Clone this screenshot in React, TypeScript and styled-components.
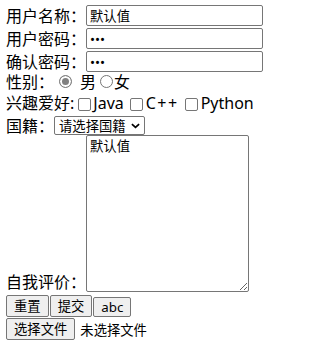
import React from "react";
import styled, { createGlobalStyle } from "styled-components";

const GlobalStyle = createGlobalStyle`
    html,
    body {
        margin: 0;
        padding: 0;
        background: #ffffff;
    }

    body {
        font-family: "Noto Sans", "Noto Sans CJK SC", sans-serif;
        font-size: 16px;
        color: #000000;
    }
`;

const App = () => {
    return (
        <>
            <GlobalStyle />
            <StyledForm onSubmit={(e) => e.preventDefault()}>
                <StyledRow $h={23} $mt={4}>
                    <StyledLabel>用户名称：</StyledLabel>
                    <StyledTextInput type="text" defaultValue="默认值" />
                </StyledRow>
                <StyledRow $h={23}>
                    <StyledLabel>用户密码：</StyledLabel>
                    <StyledTextInput type="password" defaultValue="abc" />
                </StyledRow>
                <StyledRow $h={23}>
                    <StyledLabel>确认密码：</StyledLabel>
                    <StyledTextInput type="password" defaultValue="abc" />
                </StyledRow>

                <StyledRow $h={17}>
                    <StyledLabel>性别：</StyledLabel>
                    <StyledRadio
                        type="radio"
                        name="sex"
                        defaultChecked
                        $ml={5}
                        $mr={3}
                    />
                    <StyledOption $ml={5}>男</StyledOption>
                    <StyledRadio type="radio" name="sex" $ml={4} $mr={1} />
                    <StyledOption>女</StyledOption>
                </StyledRow>

                <StyledRow $h={26}>
                    <StyledLabel>兴趣爱好:</StyledLabel>
                    <StyledCheck type="checkbox" $ml={4} $mr={2} />
                    <StyledOption>Java</StyledOption>
                    <StyledCheck type="checkbox" $ml={6} $mr={3} />
                    <StyledOption $spread>C++</StyledOption>
                    <StyledCheck type="checkbox" $ml={6} $mr={3} />
                    <StyledOption>Python</StyledOption>
                </StyledRow>

                <StyledRow $h={19}>
                    <StyledLabel>国籍：</StyledLabel>
                    <StyledSelectBox>
                        <StyledSelect defaultValue="">
                            <option value="">请选择国籍</option>
                            <option value="cn">中国</option>
                            <option value="us">美国</option>
                        </StyledSelect>
                        <StyledChevron viewBox="0 0 10 6" aria-hidden>
                            <path
                                d="M1 1 L5 4.6 L9 1"
                                fill="none"
                                stroke="#000"
                                strokeWidth="1.9"
                            />
                        </StyledChevron>
                    </StyledSelectBox>
                </StyledRow>

                <StyledRow $end>
                    <StyledLabel>自我评价：</StyledLabel>
                    <StyledTextArea defaultValue="默认值" />
                </StyledRow>

                <StyledRow $h={22} $mt={3} $end>
                    <StyledButton type="reset">重置</StyledButton>
                    <StyledButton type="submit">提交</StyledButton>
                    <StyledButton type="button" $h={20}>
                        abc
                    </StyledButton>
                </StyledRow>

                <StyledRow $h={22} $mt={1}>
                    <StyledButton type="button">选择文件</StyledButton>
                    <StyledFileSpan>未选择文件</StyledFileSpan>
                </StyledRow>
            </StyledForm>
        </>
    );
};

export default App;

const StyledForm = styled.form`
    display: flex;
    flex-direction: column;
    padding-left: 6px;
`;

const StyledRow = styled.div<{ $h?: number; $mt?: number; $end?: boolean }>`
    display: flex;
    align-items: ${({ $end }) => ($end ? "flex-end" : "center")};
    height: ${({ $h }) => ($h ? `${$h}px` : "auto")};
    margin-top: ${({ $mt }) => $mt ?? 0}px;
    white-space: nowrap;
`;

const StyledLabel = styled.span`
    line-height: 20px;
    white-space: nowrap;
`;

const StyledOption = styled.span<{ $ml?: number; $spread?: boolean }>`
    line-height: 20px;
    margin-left: ${({ $ml }) => $ml ?? 0}px;
    letter-spacing: ${({ $spread }) => ($spread ? "1.5px" : "0")};
`;

const StyledTextInput = styled.input`
    box-sizing: border-box;
    width: 177px;
    height: 21px;
    margin: 0;
    padding: 1px 3px;
    border: 1px solid #767676;
    border-radius: 2px;
    font-family: "Noto Sans", "Noto Sans CJK SC", sans-serif;
    font-size: 13.33px;
    color: #000;
    outline: none;
`;

const StyledRadio = styled.input<{ $ml: number; $mr: number }>`
    appearance: none;
    box-sizing: border-box;
    width: 13px;
    height: 13px;
    margin: 0 ${({ $mr }) => $mr}px 0 ${({ $ml }) => $ml}px;
    border: 1px solid #767676;
    border-radius: 50%;
    background: #ffffff;

    &:checked {
        border-color: #808080;
        background: #808080;
        box-shadow: inset 0 0 0 2px #ffffff;
    }
`;

const StyledCheck = styled.input<{ $ml: number; $mr: number }>`
    appearance: none;
    box-sizing: border-box;
    width: 13px;
    height: 13px;
    margin: 3px ${({ $mr }) => $mr}px 0 ${({ $ml }) => $ml}px;
    border: 1px solid #767676;
    border-radius: 2px;
    background: #ffffff;
`;

const StyledSelectBox = styled.div`
    position: relative;
    display: flex;
`;

const StyledSelect = styled.select`
    appearance: none;
    box-sizing: border-box;
    width: 91px;
    height: 19px;
    margin: 0;
    padding: 0 18px 0 4px;
    border: 1px solid #767676;
    border-radius: 2px;
    background: #ffffff;
    font-family: "Noto Sans CJK SC", "Noto Sans", sans-serif;
    font-size: 13.33px;
    line-height: 17px;
    color: #000;
`;

const StyledChevron = styled.svg`
    position: absolute;
    right: 5px;
    top: 7px;
    width: 9px;
    height: 6px;
    pointer-events: none;
`;

const StyledTextArea = styled.textarea`
    box-sizing: border-box;
    width: 163px;
    height: 157px;
    margin: 0;
    padding: 2px 3px;
    border: 1px solid #767676;
    border-radius: 2px;
    font-family: "Noto Sans CJK SC", monospace;
    font-size: 13.33px;
    line-height: 16px;
    color: #000;
    resize: both;
    outline: none;
`;

const StyledButton = styled.button<{ $h?: number }>`
    box-sizing: border-box;
    height: ${({ $h }) => $h ?? 22}px;
    margin: 0 1px 0 0;
    padding: 0 7px;
    border: 1px solid #767676;
    border-radius: 2px;
    background: #efefef;
    font-family: "Noto Sans", "Noto Sans CJK SC", sans-serif;
    font-size: 13.33px;
    line-height: 18px;
    color: #000;
`;

const StyledFileSpan = styled.span`
    margin-left: 4px;
    font-family: "Noto Sans CJK SC", sans-serif;
    font-size: 13.33px;
`;
